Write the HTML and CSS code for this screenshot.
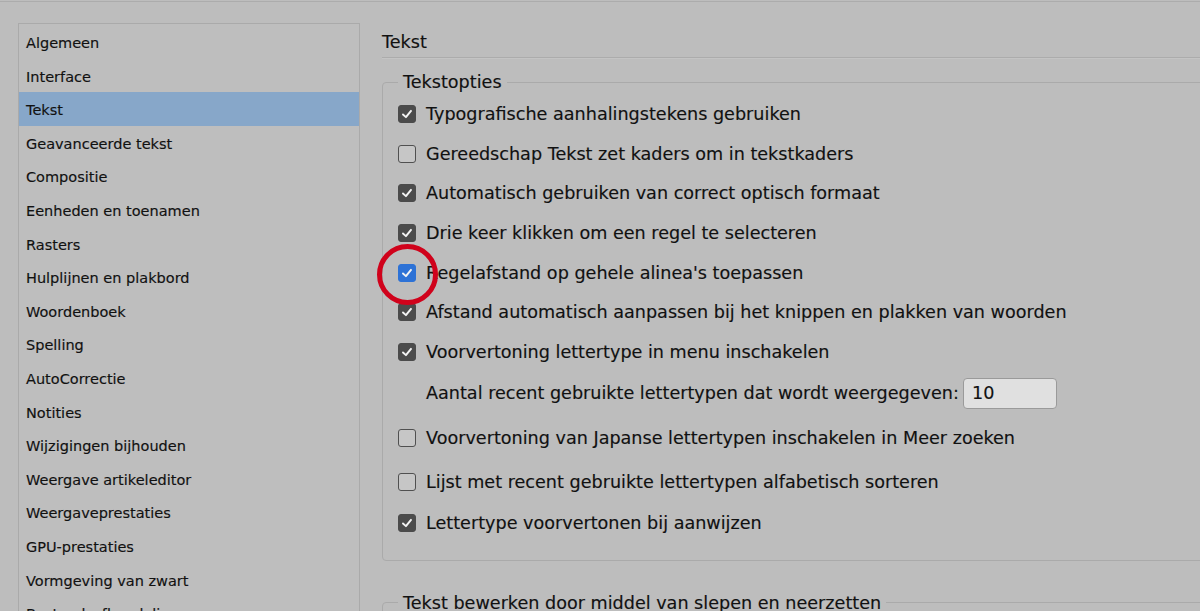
FILE: index.html
```html
<!DOCTYPE html>
<html lang="nl">
<head>
    <meta charset="UTF-8">
    <title>Voorkeuren - Tekst</title>
    <link rel="stylesheet" href="styles.css">
</head>
<body>
    <div class="top-rule"></div>
    <div class="prefs">
        <ul class="sidebar">
            <li>Algemeen</li>
            <li>Interface</li>
            <li class="selected">Tekst</li>
            <li>Geavanceerde tekst</li>
            <li>Compositie</li>
            <li>Eenheden en toenamen</li>
            <li>Rasters</li>
            <li>Hulplijnen en plakbord</li>
            <li>Woordenboek</li>
            <li>Spelling</li>
            <li>AutoCorrectie</li>
            <li>Notities</li>
            <li>Wijzigingen bijhouden</li>
            <li>Weergave artikeleditor</li>
            <li>Weergaveprestaties</li>
            <li>GPU-prestaties</li>
            <li>Vormgeving van zwart</li>
            <li>Bestandsafhandeling</li>
        </ul>

        <div class="content">
            <h1 class="page-title">Tekst</h1>

            <fieldset class="group">
                <legend>Tekstopties</legend>
                <div class="row"><span class="box checked"><svg viewBox="0 0 18 18"><polyline points="4.5,9.5 7.8,12.5 13.5,5.5"/></svg></span>Typografische aanhalingstekens gebruiken</div>
                <div class="row"><span class="box"></span>Gereedschap Tekst zet kaders om in tekstkaders</div>
                <div class="row"><span class="box checked"><svg viewBox="0 0 18 18"><polyline points="4.5,9.5 7.8,12.5 13.5,5.5"/></svg></span>Automatisch gebruiken van correct optisch formaat</div>
                <div class="row"><span class="box checked"><svg viewBox="0 0 18 18"><polyline points="4.5,9.5 7.8,12.5 13.5,5.5"/></svg></span>Drie keer klikken om een regel te selecteren</div>
                <div class="row"><span class="box checked focus"><svg viewBox="0 0 18 18"><polyline points="4.5,9.5 7.8,12.5 13.5,5.5"/></svg></span>Regelafstand op gehele alinea's toepassen</div>
                <div class="row"><span class="box checked"><svg viewBox="0 0 18 18"><polyline points="4.5,9.5 7.8,12.5 13.5,5.5"/></svg></span>Afstand automatisch aanpassen bij het knippen en plakken van woorden</div>
                <div class="row"><span class="box checked"><svg viewBox="0 0 18 18"><polyline points="4.5,9.5 7.8,12.5 13.5,5.5"/></svg></span>Voorvertoning lettertype in menu inschakelen</div>
                <div class="row row-input">
                    Aantal recent gebruikte lettertypen dat wordt weergegeven:
                    <span class="field">10</span>
                </div>
                <div class="row row-after-input"><span class="box"></span>Voorvertoning van Japanse lettertypen inschakelen in Meer zoeken</div>
                <div class="row row-spaced"><span class="box"></span>Lijst met recent gebruikte lettertypen alfabetisch sorteren</div>
                <div class="row"><span class="box checked"><svg viewBox="0 0 18 18"><polyline points="4.5,9.5 7.8,12.5 13.5,5.5"/></svg></span>Lettertype voorvertonen bij aanwijzen</div>
            </fieldset>

            <fieldset class="group second">
                <legend>Tekst bewerken door middel van slepen en neerzetten</legend>
            </fieldset>
        </div>
    </div>

    <!-- rode markering rond het aangepaste vakje -->
    <div class="highlight"></div>
</body>
</html>
```

FILE: styles.css
```css
body {
    margin: 0;
    padding-top: 1px;
    background-color: #bdbdbd;
    color: #111;
    font-family: "DejaVu Sans", sans-serif;
    height: 100vh;
    overflow: hidden;
    -webkit-text-stroke: 0.15px #111;
}

.top-rule {
    border-top: 1px solid #acacac;
}

.prefs {
    display: flex;
    gap: 22px;
    padding-left: 18px;
}

.sidebar {
    list-style: none;
    margin: 21px 0 0 0;
    padding: 1px 0 0 0;
    width: 340px;
    min-height: 620px;
    border: 1px solid #aaaaaa;
    background-color: #bebebe;
    font-size: 14.5px;
}

.sidebar li {
    height: 30.6px;
    line-height: 30.6px;
    padding: 3px 0 0 7px;
    white-space: nowrap;
}

.sidebar li.selected {
    background-color: #87a7c9;
}

.content {
    flex: 1;
    padding-top: 30px;
}

.page-title {
    margin: 0;
    font-size: 17.6px;
    font-weight: normal;
    line-height: 20px;
    padding-bottom: 5px;
    border-bottom: 1px solid #acacac;
    box-shadow: 0 1px 0 #c4c4c4;
}

.group {
    margin: 14px -30px 0 0;
    padding: 2px 0 17px 15px;
    border: 1px solid #aaaaaa;
    border-radius: 4px;
    font-size: 17.6px;
}

.group legend {
    padding: 0 5px;
    line-height: 20px;
}

.row {
    display: flex;
    align-items: center;
    gap: 10px;
    height: 39.7px;
    white-space: nowrap;
}

.row-input {
    height: 43px;
    padding-left: 28px;
    gap: 4px;
}

.row-after-input {
    height: 46px;
}

.row-spaced {
    height: 42px;
}

.box {
    width: 18px;
    height: 18px;
    box-sizing: border-box;
    border: 1px solid #505050;
    border-radius: 3px;
    background-color: #c6c6c6;
    flex-shrink: 0;
}

.box.checked {
    background-color: #4b4b4b;
    border-color: #4b4b4b;
}

.box.focus {
    background-color: #2d72d6;
    border-color: #2d72d6;
}

.box svg {
    display: block;
    width: 16px;
    height: 16px;
}

.box polyline {
    fill: none;
    stroke: #f2f2f2;
    stroke-width: 2.2;
    stroke-linecap: round;
    stroke-linejoin: round;
}

.field {
    display: inline-block;
    width: 94px;
    height: 31px;
    box-sizing: border-box;
    padding-left: 8px;
    line-height: 29px;
    background-color: #e0e0e0;
    border: 1px solid #9a9a9a;
    border-radius: 4px;
}

.second {
    margin-top: 32px;
    min-height: 40px;
}

.highlight {
    position: absolute;
    left: 377px;
    top: 244px;
    width: 61px;
    height: 61px;
    box-sizing: border-box;
    border: 5px solid #d0021b;
    border-radius: 50%;
}
```
